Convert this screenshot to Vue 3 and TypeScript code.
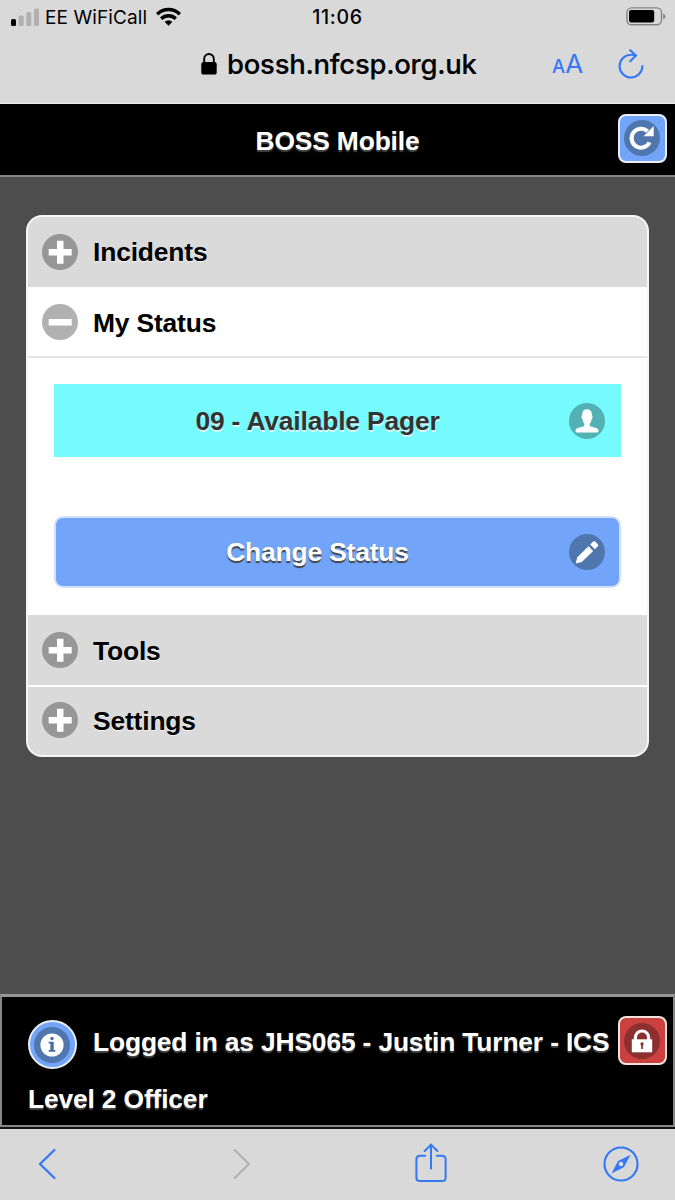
<script setup lang="ts">
interface Section {
  title: string
  open: boolean
}

const sections: Section[] = [
  { title: 'Incidents', open: false },
  { title: 'My Status', open: true },
  { title: 'Tools', open: false },
  { title: 'Settings', open: false },
]
</script>

<template>
  <div class="screen">
    <div class="status-bar">
      <div class="carrier">
        <svg class="signal" width="29" height="18" viewBox="0 0 29 18">
          <rect x="0" y="11" width="5" height="7" rx="1.5" fill="#000" />
          <rect x="7.7" y="7.5" width="5" height="10.5" rx="1.5" fill="#b0b0b0" />
          <rect x="15.3" y="4" width="5" height="14" rx="1.5" fill="#b0b0b0" />
          <rect x="23" y="0.5" width="5" height="17.5" rx="1.5" fill="#b0b0b0" />
        </svg>
        <span class="carrier-name">EE WiFiCall</span>
        <svg class="wifi" width="25" height="19" viewBox="0 0 25 19">
          <g fill="none" stroke="#000" stroke-width="3.4">
            <path d="M1.2 7.2A16 16 0 0 1 23.8 7.2" />
            <path d="M5.2 11.8A10.4 10.4 0 0 1 19.8 11.8" />
          </g>
          <path d="M8.6 14.8A6 6 0 0 1 16.4 14.8L12.5 18.7Z" fill="#000" />
        </svg>
      </div>
      <span class="clock">11:06</span>
      <svg class="battery" width="41" height="19" viewBox="0 0 41 19">
        <rect x="0.9" y="0.9" width="34.6" height="16.8" rx="4.5" fill="none" stroke="#858585" stroke-width="1.4" />
        <rect x="3" y="3.1" width="25.2" height="12.4" rx="2.2" fill="#000" />
        <path d="M37.2 6.4Q39.4 7 39.4 9.3T37.2 12.2Z" fill="#858585" />
      </svg>
    </div>

    <div class="address-bar">
      <svg class="padlock" width="16" height="22" viewBox="0 0 16 22">
        <path d="M3.2 10V5.8a4.8 4.8 0 0 1 9.6 0V10" fill="none" stroke="#000" stroke-width="1.9" />
        <rect x="0.3" y="9" width="15.4" height="12.6" rx="2.2" fill="#000" />
      </svg>
      <span class="url">bossh.nfcsp.org.uk</span>
      <span class="text-size"><span class="small-a">A</span><span class="big-a">A</span></span>
      <svg class="reload" width="26" height="30" viewBox="0 0 26 30">
        <g fill="none" stroke="#3478f6" stroke-width="2.1" stroke-linecap="round" stroke-linejoin="round">
          <path d="M24.4 17A11.4 11.4 0 1 1 13 5.7Q15.4 5.6 17.8 6.3" />
          <path d="M12.2 1.2L18 6.6L12.2 12.2" />
        </g>
      </svg>
    </div>

    <header class="page-header">
      <h1 class="page-title">BOSS Mobile</h1>
      <div class="square-button blue">
        <svg class="disc" viewBox="0 0 36 36">
          <circle cx="18" cy="18" r="18" fill="#5076ae" />
          <path d="M23.6 11.2A9.5 9.5 0 1 0 25.6 22.4" fill="none" stroke="#fff" stroke-width="4" />
          <path d="M29.7 6V16.2H19.6Z" fill="#fff" />
        </svg>
      </div>
    </header>

    <main class="page-body">
      <div class="accordion">
        <section v-for="s in sections" :key="s.title" class="section" :class="{ open: s.open }">
          <h2 class="section-head">
            <svg class="disc" viewBox="0 0 36 36">
              <circle cx="18" cy="18" r="18" :fill="s.open ? '#b1b1b1' : '#979797'" />
              <path v-if="s.open" d="M6.7 15H29.7V21.5H6.7Z" fill="#fff" />
              <path
                v-else
                d="M6.7 15H15V6.7H21.5V15H29.7V21.5H21.5V29.7H15V21.5H6.7Z"
                fill="#fff"
              />
            </svg>
            <span class="section-title">{{ s.title }}</span>
          </h2>
          <div v-if="s.open" class="section-content">
            <div class="current-status">
              <span class="button-label">09 - Available Pager</span>
              <svg class="disc" viewBox="0 0 36 36">
                <circle cx="18" cy="18" r="18" fill="#52b2b3" />
                <path
                  d="M18 6.3C14.6 6.3 13 8.8 13 12.6C12.2 12.8 12.4 15.8 13.5 16.2C13.8 18.4 14.5 19.8 15.3 20.6C15.5 22 15.3 22.8 14.8 23.4C10 24.2 6.7 25.3 6.5 27.4V28.2Q6.5 29.4 7.8 29.4H28.2Q29.5 29.4 29.5 28.2V27.4C29.3 25.3 26 24.2 21.4 23.4C20.8 22.8 20.6 22 20.8 20.6C21.6 19.8 22.3 18.4 22.6 16.2C23.7 15.8 23.9 12.8 23.1 12.6C23.1 8.8 21.4 6.3 18 6.3Z"
                  fill="#fff"
                />
              </svg>
            </div>
            <div class="change-status">
              <span class="button-label">Change Status</span>
              <svg class="disc" viewBox="0 0 36 36">
                <circle cx="18" cy="18" r="18" fill="#5076ae" />
                <path d="M6.7 29.6L8.3 23.2L19.5 12.3L24.2 17L12.8 28L6.7 29.6Z" fill="#fff" />
                <path d="M21.2 10.5L24.5 7.3Q25.2 6.7 26 7.4L29 10.4Q29.6 11.2 29 11.9L25.9 15.2Z" fill="#fff" />
              </svg>
            </div>
          </div>
        </section>
      </div>
    </main>

    <footer class="page-footer">
      <div class="footer-line first">
        <div class="round-button">
          <svg class="disc" viewBox="0 0 36 36">
            <circle cx="18" cy="18" r="18" fill="#5076ae" />
            <circle cx="18" cy="18" r="11.6" fill="#fff" />
            <path d="M14.7 14.7H19.7V23H21.3V24.7H14.7V23H16.4V16.4H14.7Z" fill="#4669a0" />
            <circle cx="18" cy="11.5" r="1.7" fill="#4669a0" />
          </svg>
        </div>
        <span class="user-line">Logged in as JHS065 - Justin Turner - ICS</span>
        <div class="square-button red">
          <svg class="disc" viewBox="0 0 36 36">
            <circle cx="18" cy="18" r="18" fill="#8d2f2f" />
            <path d="M11.4 18V14.2a6.6 6.2 0 0 1 13.2 0V18" fill="none" stroke="#fff" stroke-width="3.2" />
            <rect x="7.8" y="16.3" width="20.4" height="13" fill="#fff" />
            <path d="M18 19.2a1.8 1.8 0 0 1 .9 3.3V26H17.2V22.5a1.8 1.8 0 0 1 .8-3.3Z" fill="#8d2f2f" />
          </svg>
        </div>
      </div>
      <div class="footer-line second"><span>Level 2 Officer</span></div>
    </footer>

    <nav class="toolbar">
      <svg class="back" width="18" height="32" viewBox="0 0 18 32">
        <path d="M16.4 2L2 16L16.4 30" fill="none" stroke="#3478f6" stroke-width="2.3" stroke-linecap="round" stroke-linejoin="round" />
      </svg>
      <svg class="forward" width="18" height="32" viewBox="0 0 18 32">
        <path d="M1.6 2L16 16L1.6 30" fill="none" stroke="#b0b0b0" stroke-width="2.1" stroke-linecap="round" stroke-linejoin="round" />
      </svg>
      <svg class="share" width="32" height="40" viewBox="0 0 32 40">
        <g fill="none" stroke="#3478f6" stroke-width="2" stroke-linecap="round" stroke-linejoin="round">
          <path d="M10.2 12.7H5Q1.4 12.7 1.4 16.3V34.4Q1.4 38 5 38H27Q30.6 38 30.6 34.4V16.3Q30.6 12.7 27 12.7H21.8" />
          <path d="M16 25.5V1.6M9.6 8L16 1.6L22.4 8" />
        </g>
      </svg>
      <svg class="compass" width="36" height="36" viewBox="0 0 36 36">
        <circle cx="18" cy="18" r="16.5" fill="none" stroke="#3478f6" stroke-width="2.1" />
        <path
          d="M27.6 8.8L21 21L8.6 27.4L15 15ZM18 15.7A2.3 2.3 0 1 0 18 20.3A2.3 2.3 0 1 0 18 15.7Z"
          fill="#3478f6"
          fill-rule="evenodd"
        />
      </svg>
    </nav>
  </div>
</template>

<style>
body {
  margin: 0;
  background: #4d4d4d;
}
</style>

<style scoped>
.screen {
  display: flex;
  flex-direction: column;
  width: 675px;
  height: 1200px;
  overflow: hidden;
  background: #4d4d4d;
  font-family: "Liberation Sans", Arial, sans-serif;
  font-size: 26.4px;
  font-weight: 700;
  letter-spacing: -0.16px;
  color: #000;
}
svg {
  display: block;
  flex: none;
}
.disc {
  width: 36px;
  height: 36px;
}

.status-bar {
  display: grid;
  grid-template-columns: 225px 225px 225px;
  align-items: center;
  height: 34px;
  background: #d9d9d9;
  font-family: Inter, sans-serif;
  font-weight: 400;
  font-size: 19px;
  line-height: 24px;
  letter-spacing: 0.1px;
}
.carrier {
  display: flex;
  align-items: center;
  padding-left: 11px;
}
.carrier-name {
  width: 104px;
  margin-left: 5px;
  padding-top: 1px;
  white-space: nowrap;
}
.wifi {
  margin-left: 7px;
  margin-top: -2px;
}
.clock {
  padding-bottom: 1px;
  text-align: center;
  font-size: 19.5px;
  font-weight: 500;
  letter-spacing: 0.7px;
}
.battery {
  justify-self: end;
  margin-right: 8px;
  margin-top: -1px;
}

.address-bar {
  display: flex;
  align-items: center;
  box-sizing: border-box;
  height: 70px;
  padding: 0 0 10px 201px;
  background: #d9d9d9;
  border-bottom: 1px solid #ebebeb;
  font-family: Inter, sans-serif;
  font-weight: 500;
}
.url {
  width: 250px;
  margin-left: 10px;
  font-size: 27.5px;
  line-height: 36px;
  letter-spacing: -0.26px;
  -webkit-text-stroke: 0.2px #000;
  white-space: nowrap;
}
.text-size {
  display: flex;
  align-items: baseline;
  width: 32px;
  margin-top: 3px;
  margin-left: 75px;
  color: #3478f6;
  line-height: 36px;
  letter-spacing: 0;
}
.small-a {
  font-size: 18.5px;
}
.big-a {
  font-size: 26px;
  font-weight: 400;
}
.reload {
  margin-left: 34px;
}

.page-header {
  display: flex;
  align-items: center;
  box-sizing: border-box;
  height: 73px;
  padding: 0 8px 3px 57px;
  background: #000;
  border-bottom: 2px solid #868686;
  color: #fff;
  text-shadow: 0 2px 1px #444;
}
.page-title {
  flex: 1;
  margin: 5px 0 0;
  font-size: inherit;
  text-align: center;
  line-height: 34px;
}
.square-button,
.round-button {
  display: flex;
  flex: none;
  align-items: center;
  justify-content: center;
  box-sizing: border-box;
  width: 49px;
  height: 49px;
  border: 2px solid #e9eef7;
  border-radius: 8px;
}
.square-button .disc,
.round-button .disc {
  margin-right: 1px;
}
.blue,
.round-button {
  background: #72a5f9;
}
.red {
  background: #cb4140;
  border-color: #f3e2df;
}
.round-button {
  border-radius: 50%;
}

.page-body {
  flex: 1;
  padding: 38px 26px 0;
}
.accordion {
  box-sizing: border-box;
  width: 623px;
  height: 542px;
  border: 2px solid #f6f6f6;
  border-radius: 16px;
  overflow: hidden;
  background: #fff;
}
.section-head {
  display: flex;
  align-items: center;
  gap: 15px;
  box-sizing: border-box;
  height: 70px;
  margin: 0;
  padding-left: 14px;
  padding-bottom: 1px;
  background: #dadada;
  font-size: inherit;
  text-shadow: 0 1px 0 #f3f3f3;
}
.section-title {
  padding-top: 2px;
}
.section:last-child .section-head {
  height: 71px;
  padding-bottom: 3px;
  border-top: 2px solid #fff;
}
.section:last-child .section-title {
  padding-top: 3px;
}
.section:nth-child(3) .section-head {
  height: 70px;
}
.open .section-head {
  height: 71px;
  padding-bottom: 0;
  background: #fff;
  border-bottom: 2px solid #e4e4e4;
}
.open .section-title {
  padding-top: 3px;
}
.section:nth-child(3) .section-title {
  padding-top: 3px;
}
.section-content {
  box-sizing: border-box;
  height: 257px;
  padding: 26px 26px 0 26px;
}
.current-status,
.change-status {
  display: flex;
  align-items: center;
  box-sizing: border-box;
}
.current-status {
  height: 73px;
  padding: 0 16px 0 12px;
  background: #75fbfd;
  color: #333;
  text-shadow: 0 2px 0 #d8f8f8;
}
.current-status .button-label {
  padding-top: 2px;
}
.change-status {
  height: 72px;
  margin: 59px 0 0;
  padding: 0 14px 0 10px;
  border: 2px solid #d5e2f6;
  border-radius: 9px;
  background: #72a5f9;
  color: #fff;
  text-shadow: 0 2px 1px #444;
}
.button-label {
  flex: 1;
  text-align: center;
}

.page-footer {
  box-sizing: border-box;
  height: 133px;
  border: 2px solid #868686;
  border-top: 3px solid #969696;
  background: #000;
  color: #fff;
  text-shadow: 0 2px 1px #444;
}
.footer-line {
  display: flex;
  white-space: nowrap;
}
.first {
  height: 73px;
  padding: 19px 6px 0 26px;
  box-sizing: border-box;
}
.first .round-button {
  margin-top: 4px;
}
.user-line {
  width: 525px;
  margin-left: 16px;
  line-height: 53px;
}
.second {
  padding-left: 26px;
  line-height: 58px;
}

.toolbar {
  display: flex;
  box-sizing: border-box;
  height: 73px;
  padding: 19px 0 0 38px;
  background: #d9d9d9;
  border-top: 2px solid #111;
}
.forward {
  margin-left: 177px;
}
.share {
  margin-left: 164px;
  margin-top: -5px;
}
.compass {
  margin-left: 156px;
  margin-top: -2px;
}
</style>
